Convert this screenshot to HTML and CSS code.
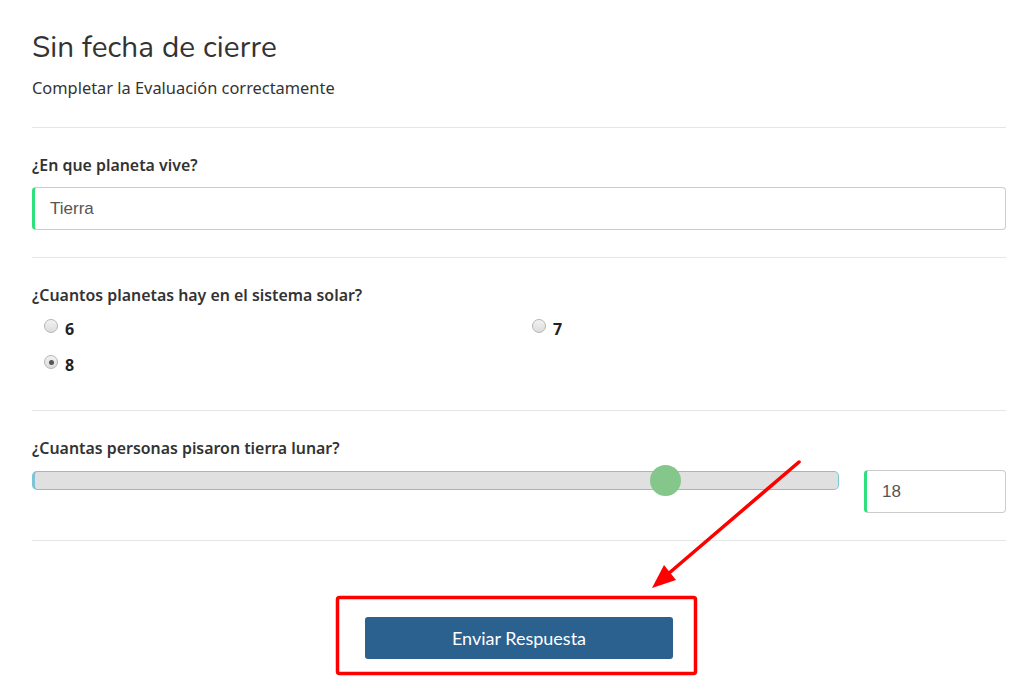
FILE: index.html
```html
<!DOCTYPE html>
<html lang="es">
<head>
<meta charset="utf-8">
<title>Evaluación</title>
<link rel="stylesheet" href="styles.css">
</head>
<body>
<div class="page">
  <header class="head">
    <h1 class="title">Sin fecha de cierre</h1>
    <p class="subtitle">Completar la Evaluación correctamente</p>
  </header>

  <section class="question">
    <div class="label">¿En que planeta vive?</div>
    <div class="text-input">Tierra</div>
  </section>

  <section class="question q-radio">
    <div class="label">¿Cuantos planetas hay en el sistema solar?</div>
    <div class="radio-grid">
      <div class="radio-opt"><span class="radio"></span><span class="opt-text">6</span></div>
      <div class="radio-opt"><span class="radio"></span><span class="opt-text">7</span></div>
      <div class="radio-opt"><span class="radio checked"></span><span class="opt-text">8</span></div>
    </div>
  </section>

  <section class="question q-range">
    <div class="label">¿Cuantas personas pisaron tierra lunar?</div>
    <div class="range-row">
      <div class="track"><span class="thumb" style="left: 78.4%"></span></div>
      <div class="num-input">18</div>
    </div>
  </section>

  <div class="actions">
    <button class="submit">Enviar Respuesta</button>
  </div>

  <svg class="annot" width="1034" height="677" viewBox="0 0 1034 677">
    <rect x="337.5" y="597.5" width="358" height="76" fill="none" stroke="#ff0000" stroke-width="3.5" rx="2"/>
    <line x1="799" y1="462" x2="668" y2="574" stroke="#ff0000" stroke-width="3.5" stroke-linecap="round"/>
    <polygon points="652,588 664,565 676,580" fill="#ff0000"/>
  </svg>
</div>
</body>
</html>
```

FILE: styles.css
```css
* { box-sizing: border-box; }
html, body { margin: 0; padding: 0; background: #fff; }
body {
  font-family: "Lato", "Noto Sans", sans-serif;
  color: #333;
  width: 1034px;
  height: 677px;
  overflow: hidden;
}
.page {
  position: relative;
  padding: 0 28px 0 32px;
}
.head {
  padding-top: 29px;
  padding-bottom: 29px;
  border-bottom: 1px solid #e6e6e6;
}
.title {
  margin: 0;
  font-family: "Nunito", "Noto Sans", sans-serif;
  font-weight: 400;
  font-size: 29.7px;
  line-height: 36px;
  color: #333;
  letter-spacing: 0.1px;
}
.subtitle {
  margin: 13px 0 0;
  font-family: "Noto Sans", sans-serif;
  font-size: 16.4px;
  line-height: 20px;
  color: #333;
}
.question {
  border-bottom: 1px solid #e6e6e6;
  padding: 27px 0 27px;
}
.label {
  font-family: "Noto Sans", sans-serif;
  font-size: 15.9px;
  font-weight: 600;
  line-height: 20px;
  color: #333;
  margin-bottom: 12px;
}
.text-input, .num-input {
  height: 43px;
  border: 1px solid #ccc;
  border-left: 3px solid #2de07a;
  border-radius: 4px;
  font-family: "Liberation Sans", Arial, sans-serif;
  font-size: 17px;
  color: #555;
  display: flex;
  align-items: center;
  padding-left: 15px;
}
.q-radio { padding-bottom: 36px; }
.q-radio .label { margin-bottom: 13px; }
.radio-grid {
  display: grid;
  grid-template-columns: 1fr 1fr;
  row-gap: 16px;
  padding-left: 12px;
}
.radio-opt {
  display: flex;
  align-items: center;
  gap: 7px;
  height: 20px;
}
.radio-opt:nth-child(2) { padding-left: 7px; }
.radio {
  width: 14px;
  height: 14px;
  border-radius: 50%;
  border: 1px solid #b5b5b5;
  background: linear-gradient(#f2f2f2, #dcdcdc);
  position: relative;
  top: -2px;
}
.radio.checked::after {
  content: "";
  position: absolute;
  left: 3.5px;
  top: 3.5px;
  width: 5px;
  height: 5px;
  border-radius: 50%;
  background: #555;
}
.opt-text {
  font-family: "Noto Sans", sans-serif;
  font-weight: 700;
  font-size: 16px;
  color: #222;
  position: relative;
  top: 1px;
}
.q-range { padding-bottom: 27px; }
.q-range .label { margin-bottom: 12px; }
.range-row {
  display: flex;
  align-items: flex-start;
  gap: 25px;
}
.track {
  flex: 1;
  height: 19px;
  margin-top: 1px;
  background: #e0e0e0;
  border: 1px solid #7ec4d4;
  border-left: 3px solid #7ec4d4;
  border-radius: 5px;
  position: relative;
}
.thumb {
  position: absolute;
  top: 50%;
  width: 31px;
  height: 31px;
  margin-left: -15px;
  margin-top: -16px;
  border-radius: 50%;
  background: #85c78a;
}
.num-input {
  width: 142px;
  height: 43px;
}
.actions {
  display: flex;
  justify-content: center;
  padding-top: 76px;
}
.submit {
  width: 308px;
  height: 42px;
  background: #2a618f;
  color: #fff;
  border: none;
  border-radius: 3px;
  font-family: "Lato", sans-serif;
  font-size: 18px;
  cursor: pointer;
}
.annot {
  position: absolute;
  left: 0;
  top: 0;
  pointer-events: none;
}
```
